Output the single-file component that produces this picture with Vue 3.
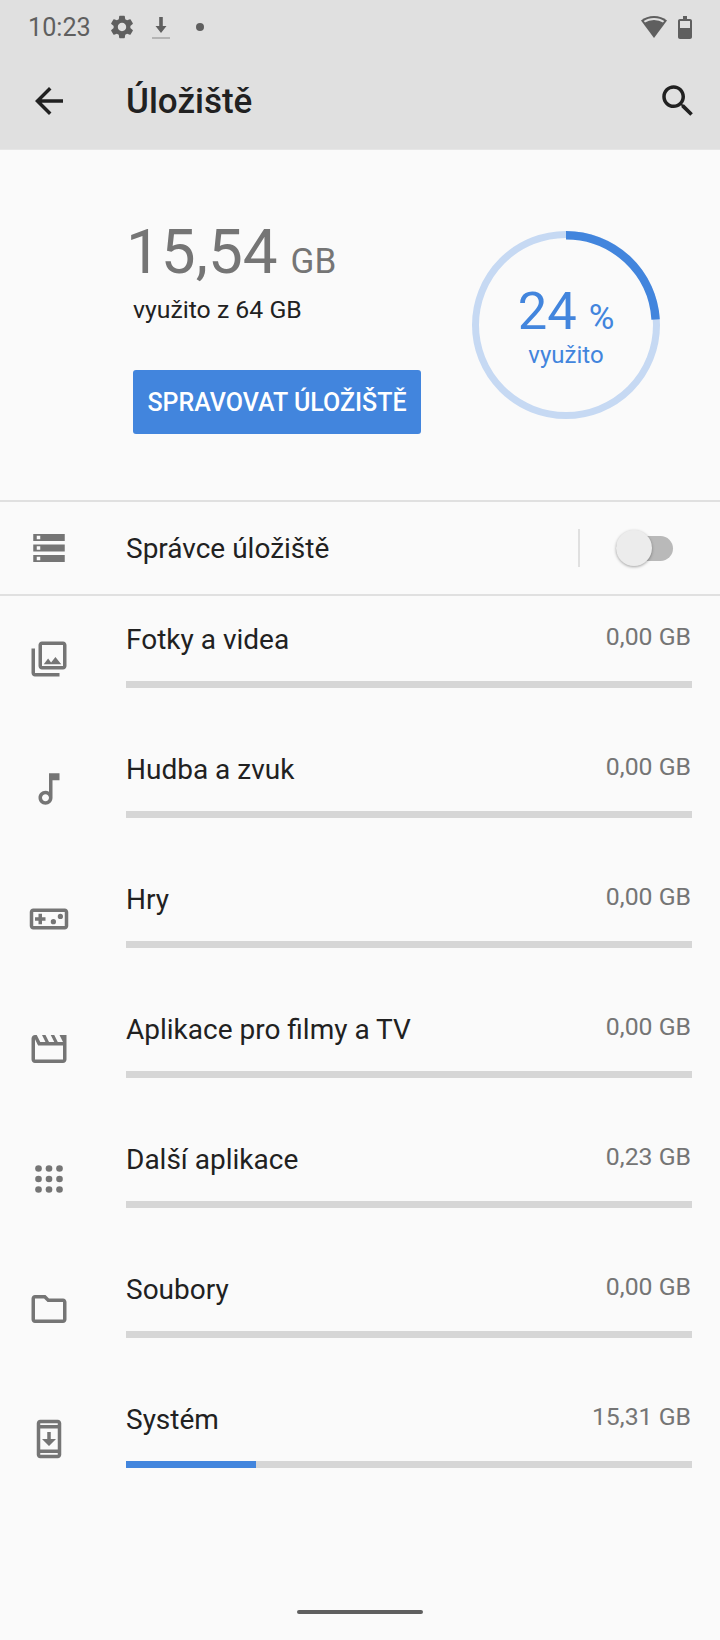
<script setup>
const rows = [
  { name: 'Fotky a videa', size: '0,00 GB', used: 0, icon: 'M20 4v12H8V4h12m0-2H8c-1.1 0-2 .9-2 2v12c0 1.1.9 2 2 2h12c1.1 0 2-.9 2-2V4c0-1.1-.9-2-2-2zm-8.5 9.67l1.69 2.26 2.48-3.1L19 15H9zM2 6v14c0 1.1.9 2 2 2h14v-2H4V6H2z' },
  { name: 'Hudba a zvuk', size: '0,00 GB', used: 0, icon: 'M12 3v10.55c-.59-.34-1.27-.55-2-.55-2.21 0-4 1.79-4 4s1.79 4 4 4 4-1.79 4-4V7h4V3h-6zm-2 16c-1.1 0-2-.9-2-2s.9-2 2-2 2 .9 2 2-.9 2-2 2z' },
  { name: 'Hry', size: '0,00 GB', used: 0, icon: 'M21 6H3c-1.1 0-2 .9-2 2v8c0 1.1.9 2 2 2h18c1.1 0 2-.9 2-2V8c0-1.1-.9-2-2-2zm0 10H3V8h18v8zM6 15h2v-2h2v-2H8V9H6v2H4v2h2zM14.5 12a1.5 1.5 0 1 0 0 3 1.5 1.5 0 0 0 0-3zM18.5 9a1.5 1.5 0 1 0 0 3 1.5 1.5 0 0 0 0-3z' },
  { name: 'Aplikace pro filmy a TV', size: '0,00 GB', used: 0, icon: 'M4 6.47L5.76 10H20v8H4V6.47M22 4h-4l2 4h-3l-2-4h-2l2 4h-3l-2-4H8l2 4H7L5 4H4c-1.1 0-1.99.9-1.99 2L2 18c0 1.1.9 2 2 2h16c1.1 0 2-.9 2-2V4z' },
  { name: 'Další aplikace', size: '0,23 GB', used: 0, dots: true },
  { name: 'Soubory', size: '0,00 GB', used: 0, icon: 'M9.17 6l2 2H20v10H4V6h5.17M10 4H4c-1.1 0-1.99.9-1.99 2L2 18c0 1.1.9 2 2 2h16c1.1 0 2-.9 2-2V8c0-1.1-.9-2-2-2h-8l-2-2z' },
  { name: 'Systém', size: '15,31 GB', used: 23, icon: 'M17 1.01L7 1c-1.1 0-2 .9-2 2v18c0 1.1.9 2 2 2h10c1.1 0 2-.9 2-2V3c0-1.1-.9-1.99-2-1.99zM17 21H7v-1h10v1zm0-3H7V6h10v12zm0-14H7V3h10v1zm-1 8h-3V8h-2v4H8l4 4 4-4z' }
]

const dots = []
for (const y of [6, 12, 18]) {
  for (const x of [6, 12, 18]) dots.push({ x, y })
}
</script>

<template>
  <div class="page">
    <header class="appbar">
      <div class="status">
        <span class="time">10:23</span>
        <svg class="gear" viewBox="0 0 24 24"><path d="M19.14 12.94c.04-.3.06-.61.06-.94 0-.32-.02-.64-.07-.94l2.03-1.58c.18-.14.23-.41.12-.61l-1.92-3.32c-.12-.22-.37-.29-.59-.22l-2.39.96c-.5-.38-1.03-.7-1.62-.94l-.36-2.54c-.04-.24-.24-.41-.48-.41h-3.84c-.24 0-.43.17-.47.41l-.36 2.54c-.59.24-1.13.57-1.62.94l-2.39-.96c-.22-.08-.47 0-.59.22L2.74 8.87c-.12.21-.08.47.12.61l2.03 1.58c-.05.3-.09.63-.09.94s.02.64.07.94l-2.03 1.58c-.18.14-.23.41-.12.61l1.92 3.32c.12.22.37.29.59.22l2.39-.96c.5.38 1.03.7 1.62.94l.36 2.54c.05.24.24.41.48.41h3.84c.24 0 .44-.17.47-.41l.36-2.54c.59-.24 1.13-.56 1.62-.94l2.39.96c.22.08.47 0 .59-.22l1.92-3.32c.12-.22.07-.47-.12-.61l-2.01-1.58zM12 15.6c-1.98 0-3.6-1.62-3.6-3.6s1.62-3.6 3.6-3.6 3.6 1.62 3.6 3.6-1.62 3.6-3.6 3.6z" /></svg>
        <svg class="download" viewBox="0 0 18 24">
          <path d="M7.2 1h3.6v9H14.5l-5.5 7-5.5-7h3.7z" />
          <rect x="0" y="21" width="18" height="2" fill="#b4b4b4" />
        </svg>
        <span class="dot"></span>
        <span class="spacer"></span>
        <svg class="wifi" viewBox="0 0 26 22">
          <path d="M13 0C8 0 3.5 1.7 0 4.5L13 22 26 4.5C22.5 1.7 18 0 13 0z" />
          <path d="M3.4 5.8C8.6 1.9 17.4 1.9 22.6 5.8" fill="none" stroke="#e0e0e0" stroke-width="2" />
        </svg>
        <svg class="battery" viewBox="0 0 14 23">
          <path d="M5 0h4v3h3c1.1 0 2 .9 2 2v16c0 1.1-.9 2-2 2H2c-1.1 0-2-.9-2-2V5c0-1.1.9-2 2-2h3z" />
          <rect x="2" y="5" width="10" height="7" fill="#e0e0e0" />
        </svg>
      </div>
      <div class="toolbar">
        <svg class="tool-icon" viewBox="0 0 24 24"><path d="M20 11H7.83l5.59-5.59L12 4l-8 8 8 8 1.41-1.41L7.83 13H20v-2z" /></svg>
        <h1>Úložiště</h1>
        <svg class="tool-icon search" viewBox="0 0 24 24"><path d="M15.5 14h-.79l-.28-.27C15.41 12.59 16 11.11 16 9.5 16 5.91 13.09 3 9.5 3S3 5.91 3 9.5 5.91 16 9.5 16c1.61 0 3.09-.59 4.23-1.57l.27.28v.79l5 4.99L20.49 19l-4.99-5zm-6 0C7.01 14 5 11.99 5 9.5S7.01 5 9.5 5 14 7.01 14 9.5 11.99 14 9.5 14z" /></svg>
      </div>
    </header>

    <section class="summary">
      <div class="summary-left">
        <div class="total"><span class="total-num">15,54</span><span class="total-unit">GB</span></div>
        <div class="total-sub">využito z 64 GB</div>
        <button class="manage">SPRAVOVAT ÚLOŽIŠTĚ</button>
      </div>
      <div class="ring">
        <svg viewBox="0 0 190 190">
          <circle cx="95" cy="95" r="90.5" fill="none" stroke="#c6d9f3" stroke-width="7" />
          <path d="M95 5.2A89.8 89.8 0 0 1 184.6 89.4" fill="none" stroke="#4285dd" stroke-width="8.4" />
        </svg>
        <div class="ring-text">
          <div class="ring-pct">24<span>%</span></div>
          <div class="ring-sub">využito</div>
        </div>
      </div>
    </section>

    <div class="manager">
      <svg class="icon" viewBox="0 0 24 24"><path d="M3 20h18v-4H3v4zm2-3h2v2H5v-2zM3 4v4h18V4H3zm4 3H5V5h2v2zm-4 7h18v-4H3v4zm2-3h2v2H5v-2z" /></svg>
      <span class="manager-label">Správce úložiště</span>
      <span class="vline"></span>
      <span class="switch"><span class="thumb"></span></span>
    </div>

    <main class="list">
      <div v-for="row in rows" :key="row.name" class="row">
        <svg class="icon" viewBox="0 0 24 24">
          <path v-if="row.icon" :d="row.icon" />
          <template v-else>
            <circle v-for="d in dots" :key="d.x + '-' + d.y" :cx="d.x" :cy="d.y" r="1.9" />
          </template>
        </svg>
        <div class="row-body">
          <div class="row-head">
            <span class="row-name">{{ row.name }}</span>
            <span class="row-size">{{ row.size }}</span>
          </div>
          <div class="bar"><div class="bar-fill" :style="{ width: row.used + '%' }"></div></div>
        </div>
      </div>
    </main>

    <footer class="nav"><span class="home"></span></footer>
  </div>
</template>

<style scoped>
.page {
  width: 720px;
  height: 1640px;
  display: flex;
  flex-direction: column;
  background: #fafafa;
  font-family: Roboto, "Liberation Sans", sans-serif;
  overflow: hidden;
}

.appbar {
  height: 150px;
  box-sizing: border-box;
  background: #e0e0e0;
  border-bottom: 1px solid #e6e6e6;
  flex-shrink: 0;
}

.status {
  height: 54px;
  display: flex;
  align-items: center;
  padding: 0 28px;
  color: #5f5f5f;
  fill: #5f5f5f;
}

.time {
  font-size: 25.2px;
  width: 80px;
}

.gear {
  width: 28px;
  height: 28px;
}

.download {
  width: 18px;
  height: 24px;
  margin-left: 16px;
  margin-top: 2px;
}

.dot {
  width: 8px;
  height: 8px;
  border-radius: 50%;
  background: #5f5f5f;
  margin-left: 26px;
}

.spacer {
  flex: 1;
}

.wifi {
  width: 26px;
  height: 22px;
}

.battery {
  width: 14px;
  height: 23px;
  margin-left: 11px;
}

.toolbar {
  height: 94px;
  display: flex;
  align-items: center;
  padding: 0 28px;
  fill: #212121;
}

.tool-icon {
  width: 42px;
  height: 42px;
  flex-shrink: 0;
}

.search {
  margin-left: auto;
  margin-right: -7px;
}

h1 {
  margin: 0 0 0 56px;
  font-size: 35px;
  font-weight: 500;
  color: #212121;
}

.summary {
  height: 350px;
  flex-shrink: 0;
  display: flex;
  justify-content: space-between;
  padding: 0 59px 0 133px;
}

.summary-left {
  padding-top: 66px;
}

.total {
  height: 72px;
  display: flex;
  align-items: baseline;
  margin-left: -7px;
  color: #757575;
}

.total-num {
  font-size: 62px;
  line-height: 72px;
}

.total-unit {
  font-size: 35px;
  margin-left: 13px;
}

.total-sub {
  font-size: 24.8px;
  line-height: 34px;
  margin-top: 5px;
  color: #212121;
}

.manage {
  display: block;
  width: 288px;
  height: 64px;
  margin-top: 43px;
  padding: 0;
  border: none;
  border-radius: 3px;
  background: #4285dd;
  color: #fff;
  font-family: inherit;
  font-size: 25px;
  font-weight: 500;
}

.ring {
  position: relative;
  width: 190px;
  height: 190px;
  margin-top: 80px;
}

.ring svg {
  display: block;
  width: 190px;
  height: 190px;
}

.ring-text {
  position: absolute;
  left: 0;
  right: 0;
  top: 50px;
  text-align: center;
  color: #4285dd;
}

.ring-pct {
  font-size: 52.5px;
  line-height: 62px;
}

.ring-pct span {
  font-size: 35px;
  margin-left: 12px;
}

.ring-sub {
  font-size: 24px;
  line-height: 30px;
  margin-top: -9px;
}

.manager {
  height: 96px;
  flex-shrink: 0;
  box-sizing: border-box;
  display: flex;
  align-items: center;
  padding-left: 28px;
  border-top: 2px solid #e0e0e0;
  border-bottom: 2px solid #e0e0e0;
}

.icon {
  width: 42px;
  height: 42px;
  flex-shrink: 0;
  fill: #757575;
}

.manager-label {
  margin-left: 56px;
  font-size: 28px;
  color: #212121;
}

.vline {
  width: 2px;
  height: 38px;
  margin-left: auto;
  background: #e0e0e0;
}

.switch {
  position: relative;
  width: 57px;
  height: 25px;
  margin: 0 47px 0 36px;
  border-radius: 13px;
  background: #b9b9b9;
}

.thumb {
  position: absolute;
  left: 0;
  top: -6px;
  width: 36px;
  height: 36px;
  border-radius: 50%;
  background: #ececec;
  box-shadow: 0 1px 3px rgba(0, 0, 0, 0.35);
}

.list {
  flex: 1;
}

.row {
  height: 130px;
  display: flex;
  padding: 0 28px;
}

.row .icon {
  margin-top: 42px;
}

.row-body {
  flex: 1;
  margin-left: 56px;
  padding-top: 24px;
}

.row-head {
  height: 61px;
  display: flex;
  justify-content: space-between;
}

.row-name {
  font-size: 28px;
  line-height: 40px;
  color: #212121;
}

.row-size {
  font-size: 24.8px;
  line-height: 34px;
  margin-right: 1px;
  color: #757575;
}

.bar {
  height: 7px;
  background: #d6d6d6;
}

.bar-fill {
  height: 100%;
  background: #4285dd;
}

.nav {
  height: 30px;
  flex-shrink: 0;
  display: flex;
  justify-content: center;
}

.home {
  width: 126px;
  height: 4px;
  border-radius: 2px;
  background: #5f5f5f;
}
</style>
